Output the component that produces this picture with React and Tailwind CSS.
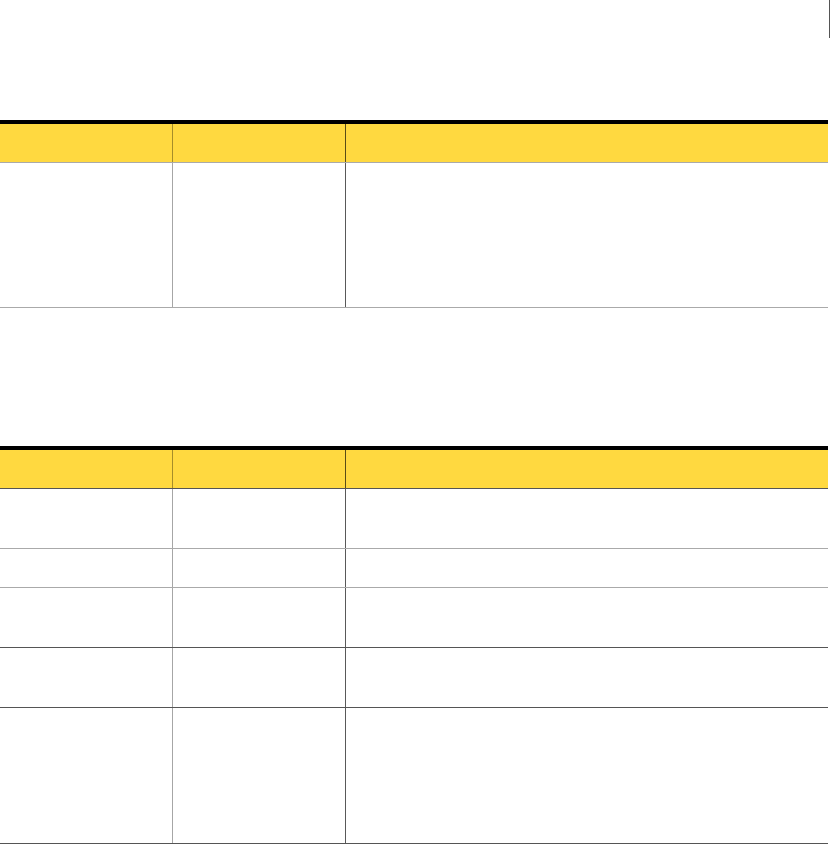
const Row = ({ height, header, line }) => (
  <div className={`flex ${height} ${header ? "bg-[#ffd940]" : "bg-white"} ${line}`}>
    <div className="w-[173px] shrink-0 border-r border-black/35"></div>
    <div className="w-[173px] shrink-0 border-r border-black/65"></div>
    <div className="flex-1"></div>
  </div>
);

const App = () => {
  return (
    <div className="min-h-screen w-[831px] bg-white font-['Liberation_Sans',sans-serif]">
      {/* page marker at top right */}
      <div className="h-[120px]">
        <div className="ml-[829px] w-[1px] h-[38px] bg-[#555]"></div>
      </div>

      {/* Table 1 */}
      <div className="w-[828px] border-t-4 border-black">
        <Row height="h-[39px]" header line="border-b border-[#aaa]" />
        <Row height="h-[145px]" line="border-b border-[#aaa]" />
      </div>

      {/* Table 2 */}
      <div className="w-[828px] mt-[138px] border-t-4 border-black">
        <Row height="h-[39px]" header line="border-b border-[#555]" />
        <Row height="h-[60px]" line="border-b border-[#aaa]" />
        <Row height="h-[39px]" line="border-b border-[#aaa]" />
        <Row height="h-[60px]" line="border-b border-[#555]" />
        <Row height="h-[60px]" line="border-b border-[#555]" />
        <Row height="h-[136px]" line="border-b border-[#555]" />
      </div>
    </div>
  );
};

export default App;
